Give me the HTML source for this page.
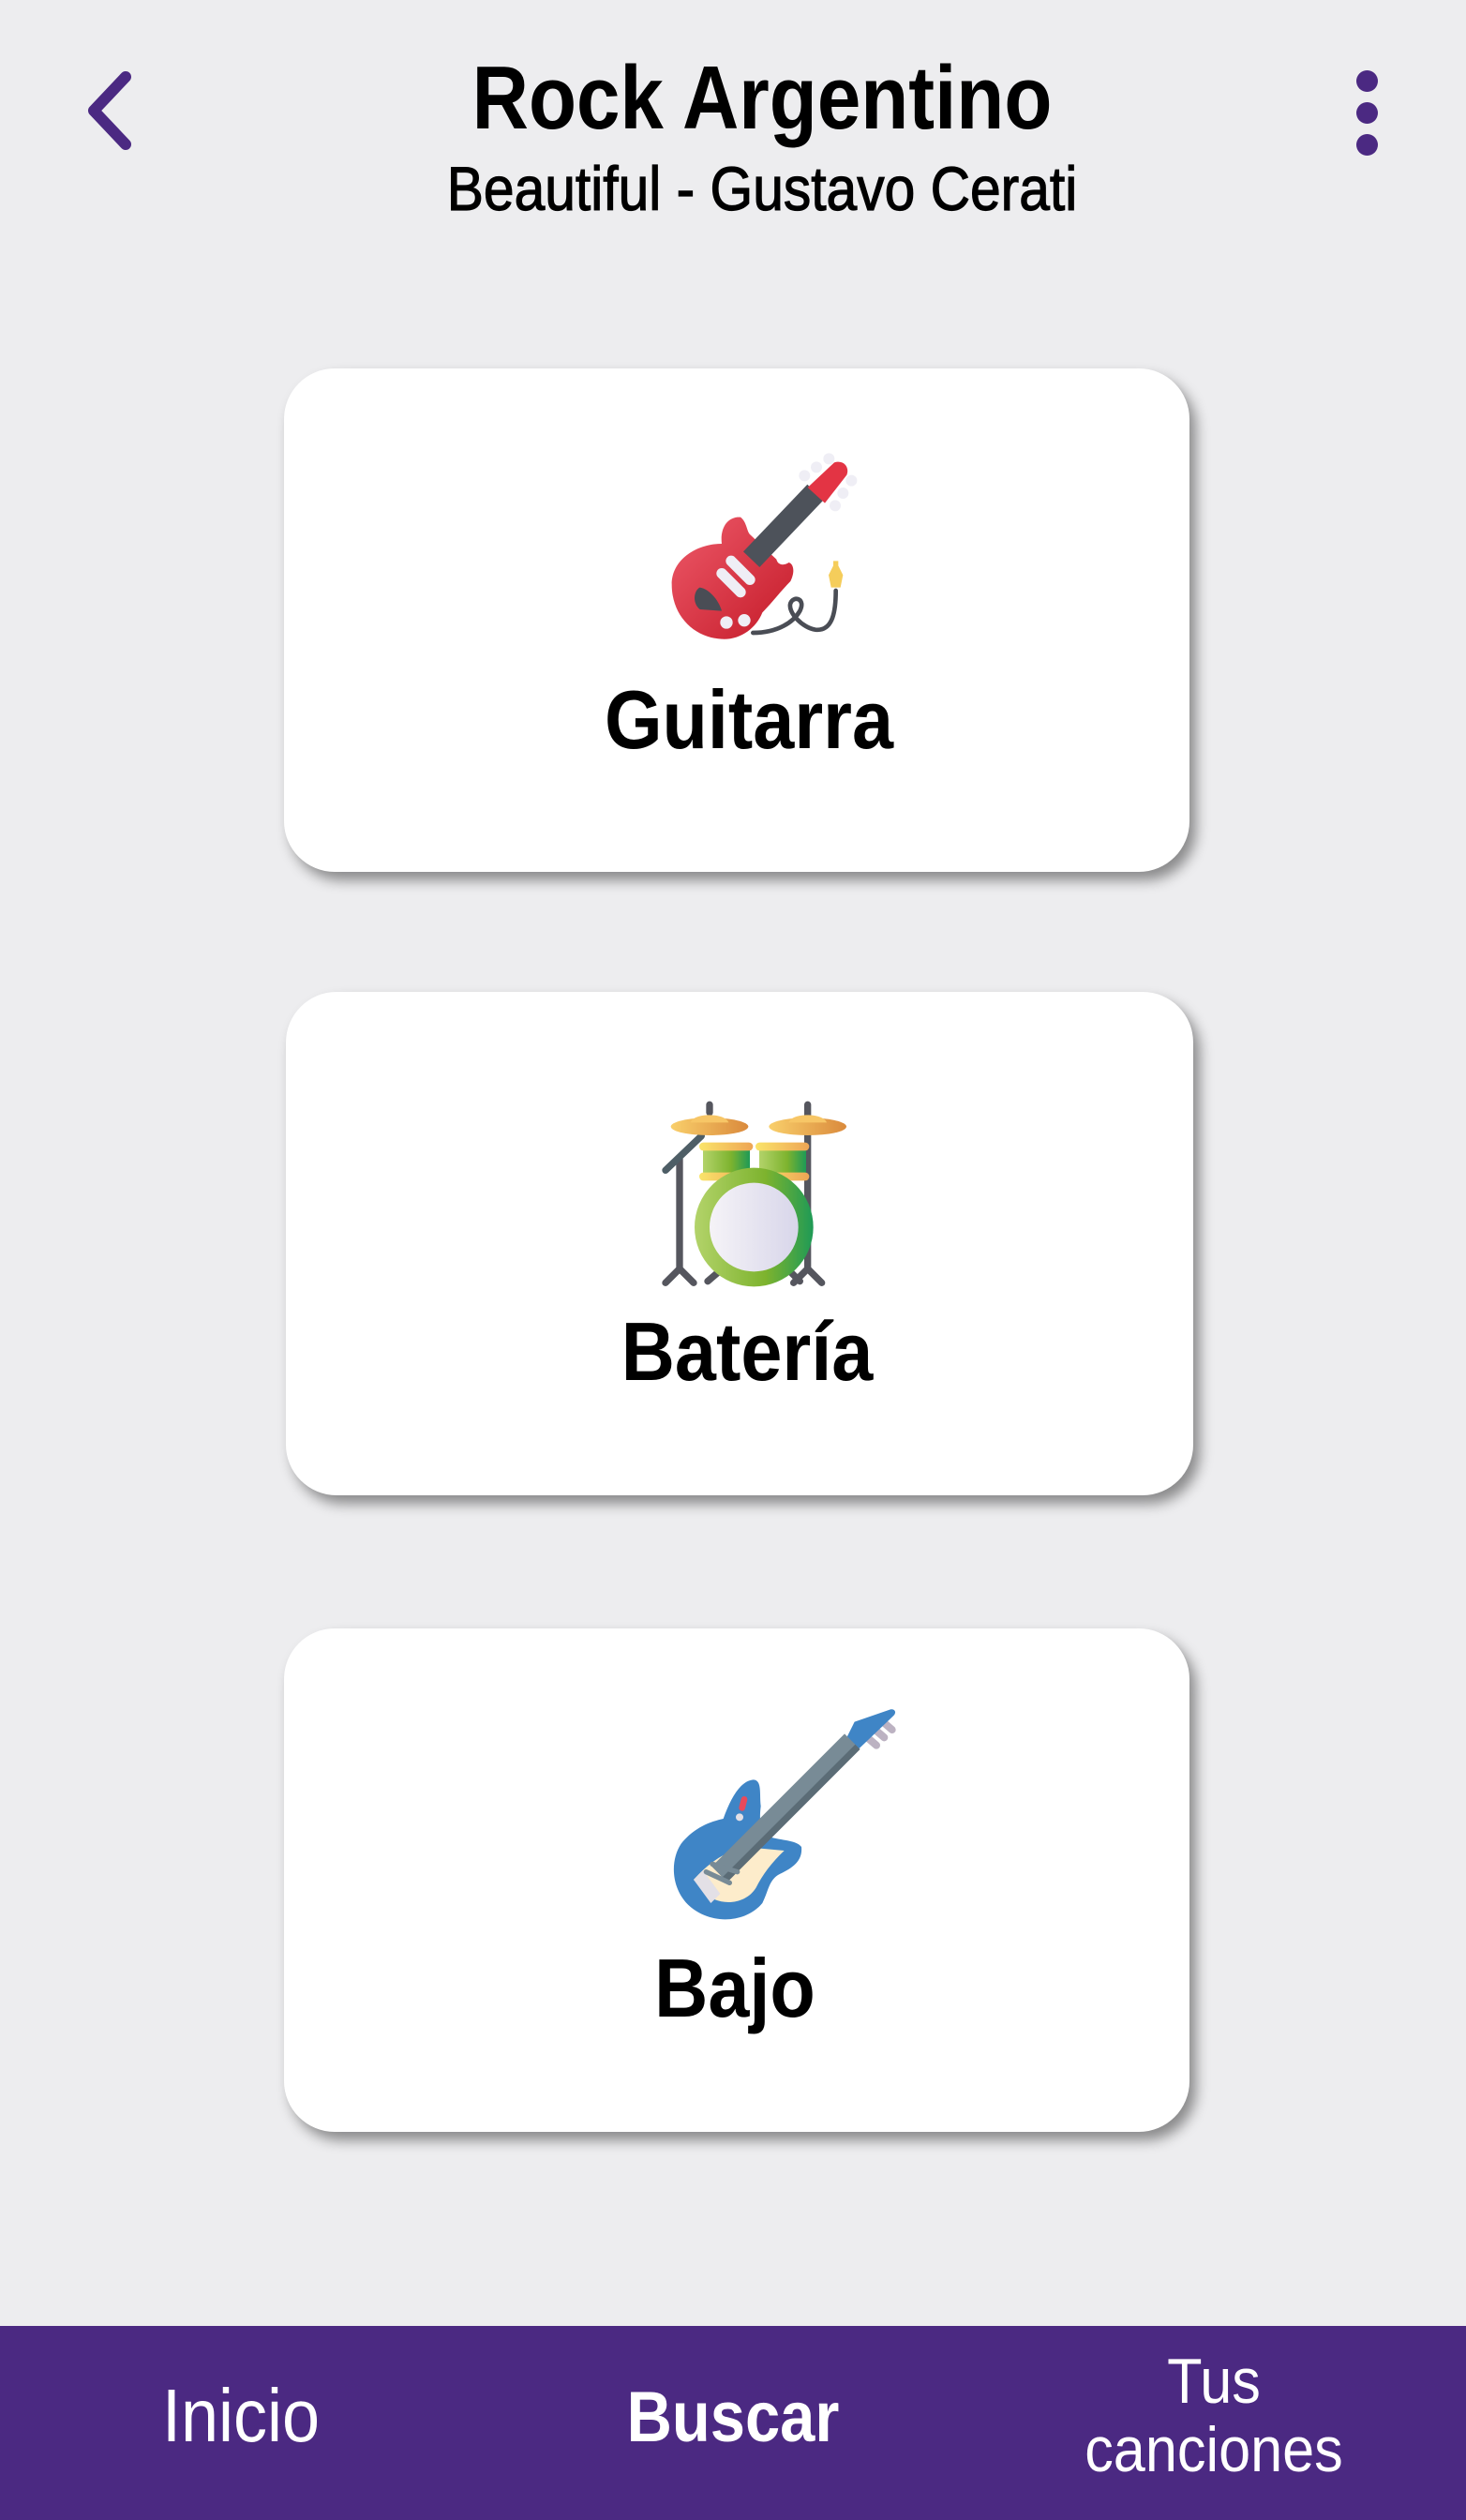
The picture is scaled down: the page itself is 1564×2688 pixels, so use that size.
<!DOCTYPE html>
<html><head><meta charset="utf-8"><style>
html,body{margin:0;padding:0}
body{width:1564px;height:2688px;background:#ededef;position:relative;overflow:hidden;font-family:"Liberation Sans",Arial,sans-serif}
.abs{position:absolute}
.t{position:absolute;white-space:nowrap;transform-origin:center}
.card{position:absolute;background:#fff;border-radius:54px;box-shadow:7px 9px 14px rgba(0,0,0,0.42)}
.dot{position:absolute;width:23px;height:23px;border-radius:50%;background:#4b2982;left:1447px}
.nav{position:absolute;left:0;top:2481px;width:1564px;height:207px;background:#4b2982}
</style></head><body>

<svg class="abs" style="left:84px;top:68px" width="70" height="100" viewBox="0 0 70 100">
<polyline points="50,14 16,50 50,86" fill="none" stroke="#4b2982" stroke-width="12" stroke-linecap="round" stroke-linejoin="round"/>
</svg>

<div class="t" style="left:0;width:1626px;top:50px;font-size:96px;font-weight:bold;line-height:110px;text-align:center;transform:scaleX(0.87);transform-origin:813px 0">Rock Argentino</div>
<div class="t" style="left:0;width:1626px;top:163px;font-size:66px;line-height:76px;text-align:center;-webkit-text-stroke:1.2px #000;transform:scaleX(0.89);transform-origin:813px 0">Beautiful - Gustavo Cerati</div>

<div class="dot" style="top:75px"></div>
<div class="dot" style="top:109px"></div>
<div class="dot" style="top:143px"></div>

<div class="card" style="left:303px;top:393px;width:966px;height:537px"></div>
<div class="card" style="left:305px;top:1058px;width:968px;height:537px"></div>
<div class="card" style="left:303px;top:1737px;width:966px;height:537px"></div>

<!-- Guitar -->
<svg class="abs" style="left:690px;top:470px" width="260" height="230" viewBox="0 0 780 690">
<defs><linearGradient id="rg" x1="0" y1="0" x2="1" y2="1"><stop offset="0" stop-color="#ee5a6a"/><stop offset="1" stop-color="#c41a28"/></linearGradient></defs>
<path d="M605 480 C605 560 590 610 540 605 C500 600 450 550 460 520 C470 495 510 505 490 545 C470 580 420 615 340 615" fill="none" stroke="#4a4d55" stroke-width="14" stroke-linecap="round"/>
<path d="M590 470 L620 470 L628 430 L613 400 L613 385 L597 385 L597 400 L582 430 Z" fill="#f5cd5b"/>
<path d="M290 245 C250 250 235 290 240 330 C160 330 80 380 80 460 C80 560 150 630 240 635 C300 638 350 600 370 550 C400 520 430 480 460 450 C475 420 470 395 455 390 C440 400 420 400 415 380 L330 300 C320 290 320 260 300 245 Z" fill="url(#rg)"/>
<line x1="335" y1="380" x2="540" y2="165" stroke="#4d525a" stroke-width="72" stroke-linecap="butt"/>
<g fill="#efeef5"><circle cx="505" cy="112" r="18"/><circle cx="543" cy="85" r="18"/><circle cx="583" cy="58" r="18"/><circle cx="655" cy="128" r="18"/><circle cx="628" cy="168" r="18"/><circle cx="603" cy="208" r="18"/></g>
<path d="M515 150 L600 70 C630 60 650 85 640 110 L570 200 Z" fill="#e33444"/>
<line x1="240" y1="425" x2="300" y2="485" stroke="#efeef5" stroke-width="34" stroke-linecap="round"/>
<line x1="270" y1="385" x2="330" y2="445" stroke="#efeef5" stroke-width="34" stroke-linecap="round"/>
<path d="M170 470 C150 480 145 520 170 540 L240 545 C230 510 200 475 170 470 Z" fill="#4a4d55"/>
<circle cx="255" cy="582" r="20" fill="#efeef5"/><circle cx="312" cy="575" r="20" fill="#efeef5"/>
</svg>

<!-- Drums -->
<svg class="abs" style="left:680px;top:1160px" width="300" height="230" viewBox="0 0 900 690">
<defs>
<linearGradient id="cy" x1="0" x2="1"><stop offset="0" stop-color="#f9cf6b"/><stop offset="1" stop-color="#da8a3c"/></linearGradient>
<linearGradient id="gr" x1="0" x2="1"><stop offset="0" stop-color="#b3d36a"/><stop offset="0.6" stop-color="#7db32e"/><stop offset="1" stop-color="#1e9a56"/></linearGradient>
<linearGradient id="wh" x1="0" x2="1"><stop offset="0" stop-color="#f5f3f7"/><stop offset="1" stop-color="#d8d6ea"/></linearGradient>
<linearGradient id="rim" x1="0" x2="1"><stop offset="0" stop-color="#fae46a"/><stop offset="1" stop-color="#eea555"/></linearGradient>
</defs>
<g stroke="#55565e" stroke-width="22" stroke-linecap="round" fill="none">
<line x1="135" y1="230" x2="135" y2="580"/><line x1="135" y1="580" x2="90" y2="625"/><line x1="135" y1="580" x2="180" y2="625"/>
<line x1="90" y1="265" x2="205" y2="155" stroke="#4e5e66"/>
<line x1="545" y1="55" x2="545" y2="580"/><line x1="545" y1="580" x2="500" y2="625"/><line x1="545" y1="580" x2="590" y2="625"/>
<line x1="231" y1="55" x2="231" y2="80"/>
<line x1="225" y1="620" x2="260" y2="590"/><line x1="520" y1="620" x2="490" y2="590"/>
</g>
<ellipse cx="231" cy="125" rx="124" ry="28" fill="url(#cy)"/><path d="M170 112 C180 80 280 80 292 112 Z" fill="#f7c666"/>
<ellipse cx="545" cy="125" rx="124" ry="28" fill="url(#cy)"/><path d="M484 112 C494 80 594 80 606 112 Z" fill="#f7c666"/>
<rect x="210" y="190" width="150" height="100" fill="url(#gr)"/><rect x="390" y="190" width="150" height="100" fill="url(#gr)"/>
<rect x="198" y="176" width="172" height="26" rx="13" fill="url(#rim)"/><rect x="378" y="176" width="172" height="26" rx="13" fill="url(#rim)"/>
<rect x="198" y="272" width="172" height="26" rx="13" fill="url(#rim)"/><rect x="378" y="272" width="172" height="26" rx="13" fill="url(#rim)"/>
<circle cx="373" cy="447" r="190" fill="url(#gr)"/>
<circle cx="373" cy="447" r="142" fill="url(#wh)"/>
</svg>

<!-- Bass -->
<svg class="abs" style="left:690px;top:1800px" width="290" height="270" viewBox="0 0 870 810">
<path d="M340 295 C300 300 270 350 245 420 C200 430 150 450 110 500 C70 560 80 660 150 710 C220 760 320 750 370 690 C390 650 390 620 420 600 C460 580 500 560 495 510 C480 490 440 490 400 480 C360 470 360 420 365 380 C360 340 370 295 340 295 Z" fill="#3f85c6"/>
<path d="M150 615 C200 560 260 515 330 512 L440 522 C400 560 370 600 350 640 C320 690 250 700 200 670 Z" fill="#fdeccb"/>
<path d="M150 615 L180 585 L235 660 L205 690 Z" fill="#e3e0e6"/>
<g stroke="#bcb2c2" stroke-width="24" stroke-linecap="round"><line x1="700" y1="155" x2="735" y2="185"/><line x1="725" y1="130" x2="760" y2="160"/><line x1="750" y1="105" x2="785" y2="135"/></g>
<path d="M640 160 L665 110 L780 70 C795 68 800 80 790 90 L680 195 Z" fill="#3f85c6"/>
<line x1="230" y1="595" x2="655" y2="170" stroke="#788b96" stroke-width="62"/>
<line x1="250" y1="615" x2="675" y2="190" stroke="#5b6c76" stroke-width="22"/>
<g stroke="#788b96" stroke-width="16" stroke-linecap="round"><line x1="210" y1="565" x2="290" y2="590"/><line x1="190" y1="590" x2="265" y2="625"/></g>
<line x1="312" y1="358" x2="305" y2="385" stroke="#e84a5c" stroke-width="20" stroke-linecap="round"/>
<circle cx="297" cy="415" r="12" fill="#e3e0e6"/>
</svg>

<div class="t" style="left:0;width:1598px;top:718px;font-size:88px;font-weight:bold;line-height:100px;text-align:center;transform:scaleX(0.9);transform-origin:799px 0">Guitarra</div>
<div class="t" style="left:0;width:1594px;top:1392px;font-size:88px;font-weight:bold;line-height:100px;text-align:center;transform:scaleX(0.9);transform-origin:797px 0">Batería</div>
<div class="t" style="left:0;width:1568px;top:2071px;font-size:88px;font-weight:bold;line-height:100px;text-align:center;transform:scaleX(0.9);transform-origin:784px 0">Bajo</div>

<div class="nav"></div>
<div class="t" style="left:0;width:514px;top:2532px;font-size:80px;line-height:90px;color:#fff;text-align:center;font-weight:300;transform:scaleX(0.9);transform-origin:257px 0">Inicio</div>
<div class="t" style="left:0;width:1564px;top:2535px;font-size:76px;line-height:88px;color:#fff;text-align:center;font-weight:bold;transform:scaleX(0.88);transform-origin:782px 0">Buscar</div>
<div class="t" style="left:0;width:2590px;top:2500px;font-size:68px;line-height:80px;color:#fff;text-align:center;transform:scaleX(0.9);transform-origin:1295px 0">Tus</div>
<div class="t" style="left:0;width:2590px;top:2573px;font-size:68px;line-height:80px;color:#fff;text-align:center;transform:scaleX(0.9);transform-origin:1295px 0">canciones</div>

</body></html>
